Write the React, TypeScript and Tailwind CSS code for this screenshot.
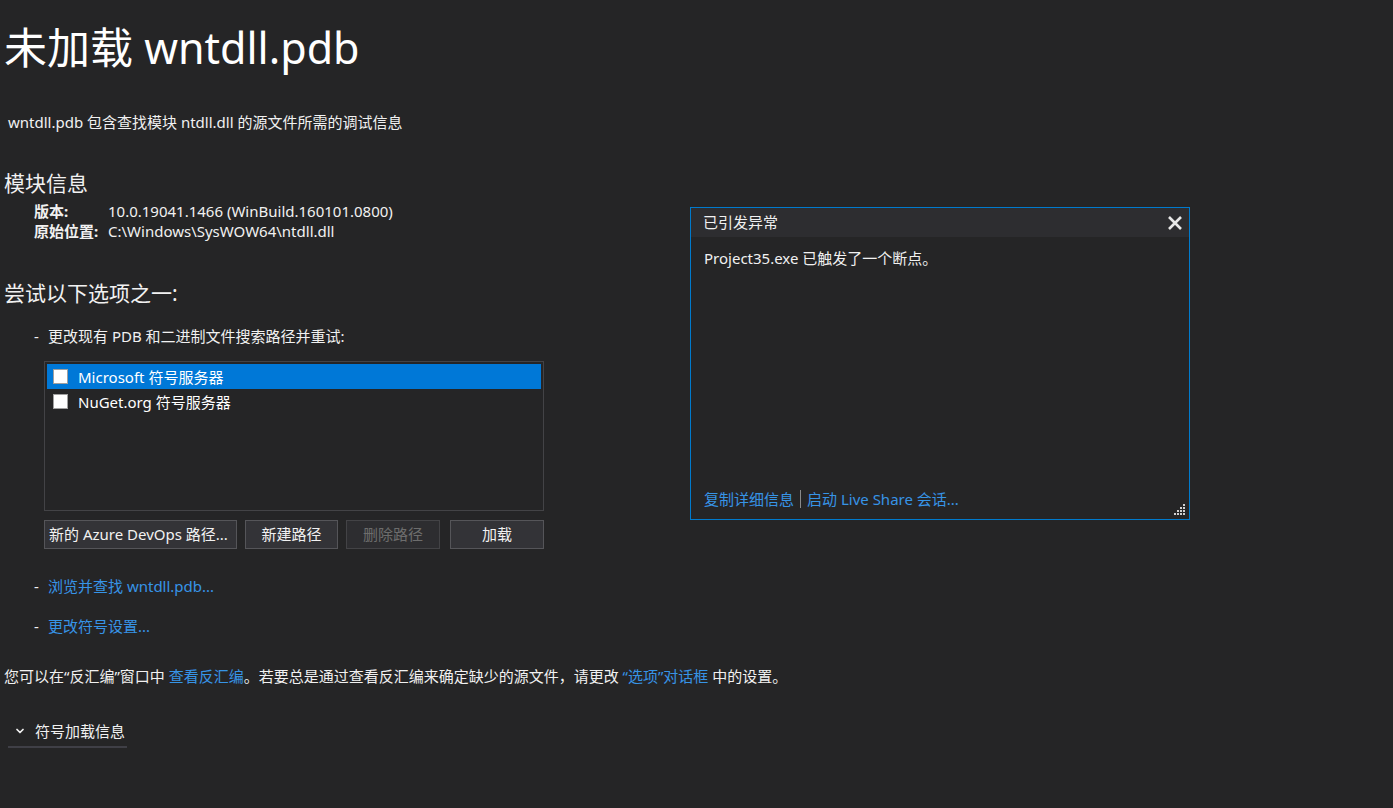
import { ChevronDown } from 'lucide-react';

const font = { fontFamily: '"Segoe UI", "Noto Sans", "Noto Sans CJK SC", sans-serif' };

function Checkbox() {
  return <span className="inline-block w-[15px] h-[15px] bg-white border border-[#a0a0a0] shrink-0" />;
}

function Grip() {
  const dots: [number, number][] = [];
  for (let r = 0; r < 4; r++) {
    for (let c = 3 - r; c < 4; c++) dots.push([c * 3, r * 3]);
  }
  return (
    <svg width="12" height="12" viewBox="0 0 12 12" className="absolute right-[3px] bottom-[3px]">
      {dots.map(([x, y], i) => (
        <rect key={i} x={x} y={y} width="2" height="2" fill="#d0d0d0" />
      ))}
    </svg>
  );
}

export default function App() {
  return (
    <div className="relative w-[1393px] h-[808px] bg-[#252526] text-[#f1f1f1] overflow-hidden" style={font}>
      <div className="flex flex-col items-start px-[4px]">
        <h1 className="mt-[20px] text-[43px] leading-[56px] text-white font-normal">未加载 wntdll.pdb</h1>
        <p className="mt-[36px] ml-[4px] text-[15px] leading-[20px]">
          wntdll.pdb 包含查找模块 ntdll.dll 的源文件所需的调试信息
        </p>

        <h2 className="mt-[37px] text-[21px] leading-[28px]">模块信息</h2>
        <div className="mt-[4px] ml-[30px] grid grid-cols-[74px_auto] text-[15px] leading-[20px]">
          <span className="font-bold">版本:</span>
          <span>10.0.19041.1466 (WinBuild.160101.0800)</span>
          <span className="font-bold">原始位置:</span>
          <span>C:\Windows\SysWOW64\ntdll.dll</span>
        </div>

        <h2 className="mt-[38px] text-[21px] leading-[28px]">尝试以下选项之一:</h2>

        <div className="mt-[19px] ml-[30px] flex text-[15px] leading-[20px]">
          <span className="w-[14px]">-</span>
          <span>更改现有 PDB 和二进制文件搜索路径并重试:</span>
        </div>

        <div className="mt-[15px] ml-[40px] w-[500px] h-[150px] border border-[#434346] bg-[#252526] p-[2px] text-[15px] leading-[24px]">
          <div className="flex items-center gap-[10px] h-[25px] pl-[6px] bg-[#0078d7] text-white">
            <Checkbox />
            <span>Microsoft 符号服务器</span>
          </div>
          <div className="flex items-center gap-[10px] h-[25px] pl-[6px] text-white">
            <Checkbox />
            <span>NuGet.org 符号服务器</span>
          </div>
        </div>

        <div className="mt-[9px] ml-[40px] flex text-[15px]">
          <button className="w-[193px] h-[29px] bg-[#333337] border border-[#555559] text-[#f1f1f1] text-left pl-[4px] whitespace-nowrap overflow-hidden">
            新的 Azure DevOps 路径...
          </button>
          <button className="ml-[8px] w-[93px] h-[29px] bg-[#333337] border border-[#555559] text-[#f1f1f1]">
            新建路径
          </button>
          <button className="ml-[8px] w-[94px] h-[29px] bg-[#2d2d30] border border-[#434346] text-[#6d6d6d]">
            删除路径
          </button>
          <button className="ml-[10px] w-[94px] h-[29px] bg-[#333337] border border-[#555559] text-[#f1f1f1]">
            加载
          </button>
        </div>

        <div className="mt-[27px] ml-[30px] flex text-[15px] leading-[20px]">
          <span className="w-[14px]">-</span>
          <span className="text-[#3794e6]">浏览并查找 wntdll.pdb...</span>
        </div>
        <div className="mt-[20px] ml-[30px] flex text-[15px] leading-[20px]">
          <span className="w-[14px]">-</span>
          <span className="text-[#3794e6]">更改符号设置...</span>
        </div>

        <p className="mt-[30px] text-[15px] leading-[20px]">
          您可以在“反汇编”窗口中 <span className="text-[#3794e6]">查看反汇编</span>
          。若要总是通过查看反汇编来确定缺少的源文件，请更改 <span className="text-[#3794e6]">“选项”对话框</span> 中的设置。
        </p>

        <div className="mt-[35px] flex items-center h-[20px] text-[15px] leading-[20px]">
          <ChevronDown size={12} strokeWidth={3.5} className="ml-[10px] text-[#f1f1f1]" />
          <span className="ml-[9px]">符号加载信息</span>
        </div>
        <div className="mt-[5px] ml-[4px] w-[119px] h-[2px] bg-[#3f3f46]" />
      </div>

      {/* exception popup */}
      <div className="absolute left-[690px] top-[207px] w-[500px] h-[313px] border border-[#007acc] bg-[#252526] flex flex-col">
        <div className="h-[29px] bg-[#2d2d30] flex items-center justify-between pl-[12px] pr-[4px] text-[15px]">
          <span>已引发异常</span>
          <svg width="16" height="16" viewBox="0 0 16 16" className="mr-[2px]">
            <path d="M2 2 L14 14 M14 2 L2 14" stroke="#e8e8e8" strokeWidth="2.6" />
          </svg>
        </div>
        <div className="px-[13px] pt-[11px] text-[15px] leading-[20px]">Project35.exe 已触发了一个断点。</div>
        <div className="mt-auto mb-[10px] px-[13px] flex items-center text-[15px] leading-[20px] text-[#3794e6]">
          <span>复制详细信息</span>
          <span className="mx-[6px] w-[1px] h-[18px] bg-[#8a8a8a]" />
          <span>启动 Live Share 会话...</span>
        </div>
        <Grip />
      </div>
    </div>
  );
}
